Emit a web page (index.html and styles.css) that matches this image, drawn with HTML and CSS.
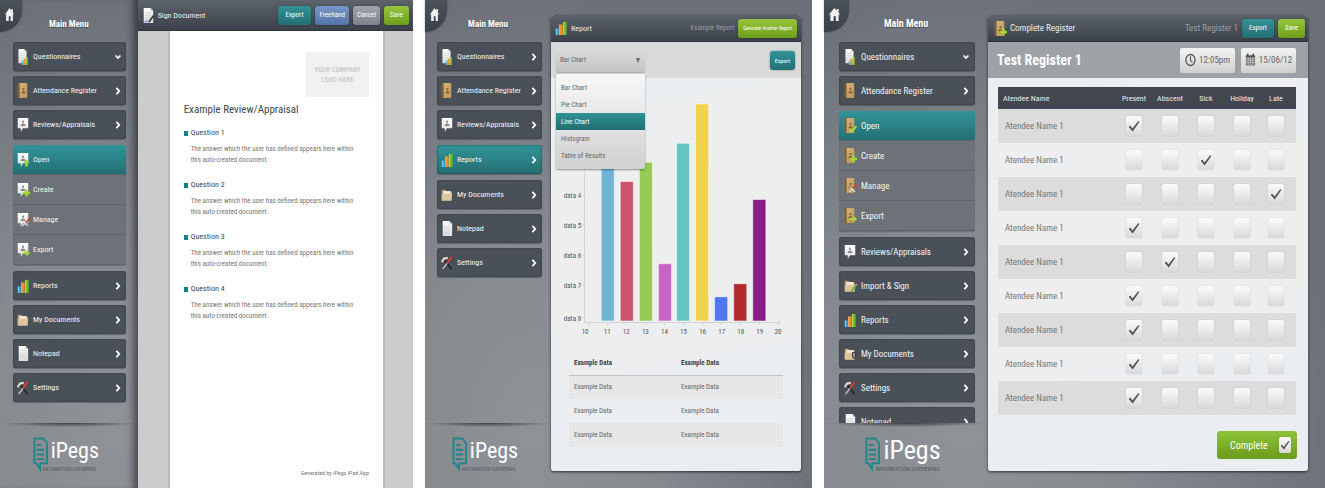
FILE: index.html
```html
<!DOCTYPE html>
<html lang="en">
<head>
<meta charset="utf-8">
<meta name="viewport" content="width=device-width, initial-scale=1">
<title>iPegs</title>
<link rel="stylesheet" href="styles.css">
</head>
<body>
<svg class="defs" aria-hidden="true">
  <defs>
    <linearGradient id="paper" x2="0" y2="1"><stop stop-color="#fff"/><stop offset="1" stop-color="#dcdcdc"/></linearGradient>
    <linearGradient id="tan" x2="1" y2="1"><stop stop-color="#d9b67c"/><stop offset="1" stop-color="#bb9358"/></linearGradient>
    <symbol id="home" viewBox="0 0 12 14" preserveAspectRatio="none"><path fill="#f2f2f2" d="M6 0 0 7h1.500v7H5V9h2.500v5h3V7H12L10.500 5V1H8.500v2z"/></symbol>
    <symbol id="bars" viewBox="0 0 14 16" preserveAspectRatio="none"><path fill="#2fa4dc" d="M1 8.500h3.500V16H1z"/><path fill="#7fd0f4" d="M1 8.500h1.200V16H1z"/><path fill="#ee8a24" d="M5 4h4v12H5z"/><path fill="#f9b566" d="M5 4h1.200v12H5z"/><path fill="#6fbb1e" d="M9.500 1h4v15h-4z"/><path fill="#b5e46a" d="M9.500 1h1.200v15H9.500z"/></symbol>
    <symbol id="page" viewBox="0 0 14 18" preserveAspectRatio="none"><path fill="url(#paper)" d="M2 1h8l3 3v13H2z"/><path fill="#bbb" d="M10 1v3h3z"/><path stroke="#c9c9c9" stroke-width=".7" d="M4 6h7M4 8.500h7M4 11h7M4 13.500h7"/></symbol>
    <symbol id="quest" viewBox="0 0 14 18" preserveAspectRatio="none"><use href="#page" width="12" height="17"/><use href="#bars" x="5" y="9" width="8" height="9"/></symbol>
    <symbol id="book" viewBox="0 0 14 18" preserveAspectRatio="none"><rect x="1" y="1" width="11" height="16" rx="1" fill="url(#tan)"/><path fill="#7b5a30" d="M1 1h2v16H1z"/><circle cx="7.500" cy="7.500" r="1.200" fill="#7c6038"/><path fill="#7c6038" d="M5 12q.5-2.500 2.500-2.500T10 12z"/></symbol>
    <symbol id="speech" viewBox="0 0 16 18" preserveAspectRatio="none"><path fill="url(#paper)" d="M1 2h14v11H8l-3 4v-4H1z"/><circle cx="8" cy="6" r="1.300" fill="#888"/><path fill="#888" d="M4.500 10.500Q5.500 8 8 8t3.500 2.500z"/></symbol>
    <symbol id="folder" viewBox="0 0 16 16" preserveAspectRatio="none"><path fill="#b99d72" d="M1 2h5l1 2h7v10H1z"/><path fill="#f4ead7" d="M3 3.500h10v4H3z"/><path fill="#dcc49b" d="M1 6.500h11l3-1-1 9H1z"/></symbol>
    <symbol id="tools" viewBox="0 0 16 16" preserveAspectRatio="none"><path stroke="#222" stroke-width="1.800" d="M5 5l9 10"/><path stroke="#ddd" stroke-width="2.600" fill="none" d="M1 7l3-4 5-1"/><path stroke="#d6402d" stroke-width="2.400" d="M14 1 8 8.500"/><path stroke="#ccc" stroke-width="1.600" d="M8 8.500 2 15"/></symbol>
    <symbol id="up" viewBox="0 0 8 8"><path fill="#a5d92f" d="M4 0 8 4H5.500v4h-3V4H0z"/></symbol>
    <symbol id="plus" viewBox="0 0 8 8"><path fill="#a5d92f" d="M2.700 0h2.600v2.700H8v2.600H5.300V8H2.700V5.300H0V2.700h2.700z"/></symbol>
    <symbol id="right" viewBox="0 0 8 8"><path fill="#a5d92f" d="M4 0l4 4-4 4V5.500H0v-3h4z"/></symbol>
    <symbol id="tick" viewBox="0 0 8 8"><path fill="none" stroke="#a5d92f" stroke-width="2" d="M.700 4 3 6.500 7.300 1"/></symbol>
    <symbol id="pen" viewBox="0 0 8 8"><path stroke="#d6402d" stroke-width="1.700" d="M7.500.500 3.500 5"/><path stroke="#ddd" stroke-width="1.300" d="M3.500 5 .500 8M1 3l5 5"/></symbol>
    <symbol id="chev" viewBox="0 0 6 10"><path fill="none" stroke="#fff" stroke-width="2.200" d="M1 1l3.500 4L1 9"/></symbol>
    <symbol id="down" viewBox="0 0 8 6"><path fill="none" stroke="#fff" stroke-width="2.200" d="M.800 1 4 4.500 7.200 1"/></symbol>
    <symbol id="signdoc" viewBox="0 0 14 18" preserveAspectRatio="none"><use href="#page" width="14" height="18"/><path stroke="#333" stroke-width="1.800" d="M13.500 9 8 16"/><path stroke="#3f7fd0" d="M3 15.500h4"/></symbol>
    <symbol id="mark" viewBox="0 0 16 36"><path fill="none" stroke="#1f8589" stroke-width="2" d="M1.500 1.500H11l4 5V28H7.500v6L3.500 28h-2z"/><path stroke="#1f8589" stroke-width="2" d="M4 8.500h5M4 13.500h8M4 18.500h8M4 23.500h8"/></symbol>
    <symbol id="clock" viewBox="0 0 12 14"><ellipse cx="6" cy="7" rx="5" ry="6" fill="none" stroke="#555" stroke-width="1.400"/><path fill="none" stroke="#555" stroke-width="1.200" d="M6 3v4.500l2.200 2"/></symbol>
    <symbol id="cal" viewBox="0 0 12 14"><path fill="#777" d="M1 2h10v11H1z"/><path fill="#555" d="M1 2h10v2.500H1z"/><path stroke="#444" stroke-width="1.500" d="M3 0v3M9 0v3"/><path stroke="#ddd" stroke-width=".6" d="M1 4.700h10M1 7.200h10M1 9.700h10M3.500 4.500V13M6 4.500V13M8.500 4.500V13"/></symbol>
  </defs>
</svg>

<main class="screens">
  <section class="screen sign">
    <aside class="side">
      <button class="home" aria-label="Home"><svg><use href="#home"/></svg></button>
      <h2 class="side-title">Main Menu</h2>
      <nav class="menu">
        <button class="item"><svg class="ico"><use href="#quest"/></svg><span>Questionnaires</span><svg class="arrow"><use href="#down"/></svg></button>
        <button class="item"><svg class="ico"><use href="#book"/></svg><span>Attendance Register</span><svg class="arrow"><use href="#chev"/></svg></button>
        <button class="item"><svg class="ico"><use href="#speech"/></svg><span>Reviews/Appraisals</span><svg class="arrow"><use href="#chev"/></svg></button>
        <div class="sub">
          <button class="subitem active"><svg class="ico"><use href="#speech"/><use href="#up" x="6" y="8" width="7" height="8"/></svg><span>Open</span></button>
          <button class="subitem"><svg class="ico"><use href="#speech"/><use href="#plus" x="6" y="8" width="7" height="8"/></svg><span>Create</span></button>
          <button class="subitem"><svg class="ico"><use href="#speech"/><use href="#pen" x="5" y="7" width="8" height="8"/></svg><span>Manage</span></button>
          <button class="subitem"><svg class="ico"><use href="#speech"/><use href="#right" x="6" y="8" width="7" height="8"/></svg><span>Export</span></button>
        </div>
        <button class="item"><svg class="ico short"><use href="#bars"/></svg><span>Reports</span><svg class="arrow"><use href="#chev"/></svg></button>
        <button class="item"><svg class="ico short"><use href="#folder"/></svg><span>My Documents</span><svg class="arrow"><use href="#chev"/></svg></button>
        <button class="item"><svg class="ico"><use href="#page"/></svg><span>Notepad</span><svg class="arrow"><use href="#chev"/></svg></button>
        <button class="item"><svg class="ico short"><use href="#tools"/></svg><span>Settings</span><svg class="arrow"><use href="#chev"/></svg></button>
      </nav>
      <footer class="brand"><svg><use href="#mark"/></svg><div><b>iPegs</b><small>INFORMATION GATHERING</small></div></footer>
    </aside>
    <div class="viewer">
      <header class="bar">
        <svg class="ico"><use href="#signdoc"/></svg><h1>Sign Document</h1>
        <button class="btn teal">Export</button><button class="btn blue">Freehand</button><button class="btn grey">Cancel</button><button class="btn green">Save</button>
      </header>
      <article class="paper">
        <div class="logo-box">YOUR COMPANY<br>LOGO HERE</div>
        <h2>Example Review/Appraisal</h2>
        <section><h3>Question 1</h3><p>The answer which the user has defined appears here within this auto-created document.</p></section>
        <section><h3>Question 2</h3><p>The answer which the user has defined appears here within this auto-created document.</p></section>
        <section><h3>Question 3</h3><p>The answer which the user has defined appears here within this auto-created document.</p></section>
        <section><h3>Question 4</h3><p>The answer which the user has defined appears here within this auto-created document.</p></section>
        <footer>Generated by iPegs iPad App</footer>
      </article>
    </div>
  </section>

  <section class="screen report">
    <aside class="side">
      <button class="home" aria-label="Home"><svg><use href="#home"/></svg></button>
      <h2 class="side-title">Main Menu</h2>
      <nav class="menu">
        <button class="item"><svg class="ico"><use href="#quest"/></svg><span>Questionnaires</span><svg class="arrow"><use href="#chev"/></svg></button>
        <button class="item"><svg class="ico"><use href="#book"/></svg><span>Attendance Register</span><svg class="arrow"><use href="#chev"/></svg></button>
        <button class="item"><svg class="ico"><use href="#speech"/></svg><span>Reviews/Appraisals</span><svg class="arrow"><use href="#chev"/></svg></button>
        <button class="item active"><svg class="ico short"><use href="#bars"/></svg><span>Reports</span><svg class="arrow"><use href="#chev"/></svg></button>
        <button class="item"><svg class="ico short"><use href="#folder"/></svg><span>My Documents</span><svg class="arrow"><use href="#chev"/></svg></button>
        <button class="item"><svg class="ico"><use href="#page"/></svg><span>Notepad</span><svg class="arrow"><use href="#chev"/></svg></button>
        <button class="item"><svg class="ico short"><use href="#tools"/></svg><span>Settings</span><svg class="arrow"><use href="#chev"/></svg></button>
      </nav>
      <footer class="brand"><svg><use href="#mark"/></svg><div><b>iPegs</b><small>INFORMATION GATHERING</small></div></footer>
    </aside>
    <div class="panel">
      <header class="bar">
        <svg class="ico short"><use href="#bars"/></svg><h1>Report</h1><span class="note">Example Report</span><button class="btn green">Generate Another Report</button>
      </header>
      <div class="tools">
        <div class="picker">
          <select aria-label="Chart type"><option>Bar Chart</option><option>Pie Chart</option><option>Line Chart</option><option>Histogram</option><option>Table of Results</option></select>
          <div class="options">
            <button>Bar Chart</button><button>Pie Chart</button><button class="on">Line Chart</button><button>Histogram</button><button>Table of Results</button>
          </div>
        </div>
        <button class="btn teal">Export</button>
      </div>
      <svg class="chart" viewBox="0 0 249 267" role="img" aria-label="Bar chart">
        <path fill="none" stroke="#d2d2d2" d="M33.500 60v183.500H229M31 117.500h3M31 146.500h3M31 176.500h3M31 206.500h3M31 238.500h3M37.500 243v3M56.500 243v3M75.500 243v3M94.500 243v3M113.500 243v3M132.500 243v3M151.500 243v3M169.500 243v3M188.500 243v3M207.500 243v3M226.500 243v3"/>
        <g stroke="#fff" stroke-opacity=".5">
          <path fill="#70b5d6" d="M50 72h13v170H50z"/><path fill="#cb566b" d="M69 103h13v139H69z"/><path fill="#96cb57" d="M88 84h13v158H88z"/><path fill="#c564c7" d="M107 185h13v57h-13z"/><path fill="#67c5c6" d="M125 65h13v177h-13z"/><path fill="#efd24e" d="M144 26h13v216h-13z"/><path fill="#4f78ef" d="M163 218h13v24h-13z"/><path fill="#b02b2d" d="M182 205h13v37h-13z"/><path fill="#891c85" d="M201 121h13v121h-13z"/>
        </g>
        <g class="ylab"><text x="30" y="120">data 4</text><text x="30" y="149">data 5</text><text x="30" y="179">data 6</text><text x="30" y="209">data 7</text><text x="30" y="242">data 8</text></g>
        <g class="xlab"><text x="34" y="255">10</text><text x="56" y="255">11</text><text x="75" y="255">12</text><text x="94" y="255">13</text><text x="113" y="255">14</text><text x="132" y="255">15</text><text x="151" y="255">16</text><text x="170" y="255">17</text><text x="189" y="255">18</text><text x="208" y="255">19</text><text x="226" y="255">20</text></g>
      </svg>
      <table class="data">
        <thead><tr><th>Example Data</th><th>Example Data</th></tr></thead>
        <tbody><tr><td>Example Data</td><td>Example Data</td></tr><tr><td>Example Data</td><td>Example Data</td></tr><tr><td>Example Data</td><td>Example Data</td></tr></tbody>
      </table>
    </div>
  </section>

  <section class="screen register">
    <aside class="side">
      <button class="home" aria-label="Home"><svg><use href="#home"/></svg></button>
      <h2 class="side-title">Main Menu</h2>
      <nav class="menu">
        <button class="item"><svg class="ico"><use href="#quest"/></svg><span>Questionnaires</span><svg class="arrow"><use href="#down"/></svg></button>
        <button class="item"><svg class="ico"><use href="#book"/></svg><span>Attendance Register</span><svg class="arrow"><use href="#chev"/></svg></button>
        <div class="sub">
          <button class="subitem active"><svg class="ico"><use href="#book"/><use href="#tick" x="5" y="8" width="8" height="8"/></svg><span>Open</span></button>
          <button class="subitem"><svg class="ico"><use href="#book"/><use href="#plus" x="6" y="8" width="7" height="8"/></svg><span>Create</span></button>
          <button class="subitem"><svg class="ico"><use href="#book"/><use href="#pen" x="5" y="7" width="8" height="8"/></svg><span>Manage</span></button>
          <button class="subitem"><svg class="ico"><use href="#book"/><use href="#right" x="6" y="8" width="7" height="8"/></svg><span>Export</span></button>
        </div>
        <button class="item"><svg class="ico"><use href="#speech"/></svg><span>Reviews/Appraisals</span><svg class="arrow"><use href="#chev"/></svg></button>
        <button class="item"><svg class="ico short"><use href="#folder"/><path stroke="#5fb83a" stroke-width="2" d="M12 6l-5 7"/><path stroke="#e06a6a" stroke-width="2" d="M13 5l-1 1.500"/></svg><span>Import &amp; Sign</span><svg class="arrow"><use href="#chev"/></svg></button>
        <button class="item"><svg class="ico short"><use href="#bars"/></svg><span>Reports</span><svg class="arrow"><use href="#chev"/></svg></button>
        <button class="item"><svg class="ico short"><use href="#folder"/><path fill="#444" d="M8 5h4v5l-2 2-2-2z"/><path fill="#ddd" d="M9.500 6h1v4h-1z"/></svg><span>My Documents</span><svg class="arrow"><use href="#chev"/></svg></button>
        <button class="item"><svg class="ico short"><use href="#tools"/></svg><span>Settings</span><svg class="arrow"><use href="#chev"/></svg></button>
        <button class="item"><svg class="ico"><use href="#page"/></svg><span>Notepad</span><svg class="arrow"><use href="#chev"/></svg></button>
      </nav>
      <footer class="brand"><svg><use href="#mark"/></svg><div><b>iPegs</b><small>INFORMATION GATHERING</small></div></footer>
    </aside>
    <div class="panel">
      <header class="bar">
        <svg class="ico"><use href="#book"/><use href="#plus" x="6" y="8" width="7" height="8"/></svg><h1>Complete Register</h1><span class="note">Test Register 1</span><button class="btn teal">Export</button><button class="btn green">Save</button>
      </header>
      <div class="title-row">
        <h2>Test Register 1</h2>
        <button class="chip"><svg><use href="#clock"/></svg>12:05pm</button>
        <button class="chip"><svg><use href="#cal"/></svg>15/06/12</button>
      </div>
      <table class="roll">
        <thead><tr><th class="name">Atendee Name</th><th>Present</th><th>Abscent</th><th>Sick</th><th>Holiday</th><th>Late</th></tr></thead>
        <tbody id="roll"></tbody>
      </table>
      <label class="complete">Complete<input type="checkbox" checked></label>
    </div>
  </section>
</main>
<script src="register.js"></script>
</body>
</html>
```
FILE: styles.css
```css
* { box-sizing: border-box; }
body {
  margin: 0;
  background: #fff;
  font-family: "Roboto Condensed", Roboto, Lato, sans-serif;
  font-size: 8px;
}
h1, h2, h3, p { margin: 0; font-weight: 400; }
button, select, input { font: inherit; margin: 0; border: 0; padding: 0; }
.defs { position: absolute; width: 0; height: 0; }

.screens {
  display: grid;
  grid-template-columns: 413fr 387fr 501fr;
  gap: 12px;
  min-height: 100vh;
  padding-bottom: 2px;
}
.screen {
  display: grid;
  background: radial-gradient(ellipse 75% 90% at 28% 88%, #8f9397 0%, #868a8f 45%, #6c7179 100%);
}
.sign { grid-template-columns: 1fr 2fr; }
.report { grid-template-columns: 126fr 261fr; }
.register { grid-template-columns: 164fr 337fr; font-size: 9px; }

/* sidebar */
.side { position: relative; display: flex; flex-direction: column; min-width: 0; }
.sign .side { box-shadow: inset -10px 0 8px -6px #0008; }
.home {
  position: absolute; left: 0; top: 0;
  width: 22px; height: 32px;
  padding: 0 4px 4px 0;
  border-radius: 0 0 22px 0;
  background: linear-gradient(#4b5159, #3a4047);
  box-shadow: 0 0 2px #0006;
}
.home svg { display: block; width: 9px; height: 13px; margin: 0 auto; }
.register .home { width: 25px; }
.register .home svg { width: 11px; }
.side-title {
  padding: 17px 0 0;
  height: 42px;
  line-height: 14px;
  color: #fff;
  font-size: 9px;
  font-weight: 700;
  text-align: center;
  text-shadow: 0 1px 1px #0005;
}
.register .side-title { font-size: 10px; }
.menu {
  flex: 1 1 0;
  min-height: 0;
  display: flex; flex-direction: column; gap: 5px;
  padding: 0 12px 0 13px;
  overflow: hidden;
}
.report .menu { padding: 0 9px 0 12px; }
.register .menu { padding: 0 13px 0 15px; }
.item, .subitem {
  flex: none;
  display: flex; align-items: center; gap: 4px;
  height: 29px;
  padding: 0 5px 0 4px;
  color: #f4f5f6;
  text-align: left;
  white-space: nowrap;
}
.item { border-radius: 3px; background: #4a5058; box-shadow: inset 0 0 2px #2d3238, 0 1px 1px #0004; }
.item span, .subitem span { flex: 1; min-width: 0; }
.ico { flex: none; width: 12px; height: 17px; overflow: visible; }
.short { height: 14px; }
.arrow { flex: none; width: 6px; height: 8px; }
.register .item, .register .subitem { padding: 0 6px 0 5px; gap: 5px; }
.item.active { margin: 1px 0; }
.item.active, .subitem.active { background: linear-gradient(#319498, #236f73); }
.sub { flex: none; margin: 1px 0; border-radius: 2px; background: #6d7278; box-shadow: 0 1px 1px #0003; }
.subitem { width: 100%; height: 30px; background: none; border-bottom: 1px solid #5f646b; }
.brand {
  flex: none;
  display: flex; justify-content: center; align-items: flex-start; gap: 3px;
  height: 65px;
  padding: 13px 6px 0 0;
  background: radial-gradient(ellipse 50% 4px at 50% 0, #26282bcc, #0000);
}
.brand svg { width: 15px; height: 36px; }
.brand b { display: block; font-size: 22px; line-height: 29px; font-weight: 400; color: #fff; }
.brand small { display: block; margin-left: -8px; font-size: 5px; line-height: 8px; color: #55595e; white-space: nowrap; }
.register .brand b { font-size: 26px; }
.register .brand small { font-size: 6px; }

/* shared bars and buttons */
.bar {
  display: flex; align-items: center; gap: 4px;
  height: 27px;
  padding: 0 4px;
  background: linear-gradient(#5c636b, #3b4149);
  border-bottom: 1px solid #2e3339;
  color: #eceded;
}
.bar h1 { flex: 1; font-size: inherit; white-space: nowrap; }
.note { color: #9a9ea3; white-space: nowrap; }
.btn {
  height: 19px;
  padding: 0 7px;
  border-radius: 3px;
  color: #fff;
  font-size: 7px;
  white-space: nowrap;
  box-shadow: 0 0 2px #0006;
}
.teal { background: linear-gradient(#319297, #246f73); }
.green { background: linear-gradient(#97c53e, #6c9f1b); }
.blue { background: linear-gradient(#7695c8, #5474a8); }
.grey { background: linear-gradient(#a0a4ac, #7e828a); }

/* document */
.viewer { display: flex; flex-direction: column; background: #ccc; }
.sign .bar { height: 31px; }
.sign .btn { padding: 0 4px; }
.sign .bar .teal { padding: 0 8px; }
.sign .bar .green { padding: 0 6px; }
.paper {
  flex: 1;
  display: flex; flex-direction: column;
  margin: 0 28px 0 30px;
  padding: 21px 14px 8px 14px;
  border: solid #b9b9b9; border-width: 0 2px;
  background: #fff;
}
.logo-box {
  align-self: flex-end;
  display: grid; align-content: center;
  width: 63px; height: 45px;
  background: #f1f1f1;
  color: #bcbcbc;
  font-size: 7px; line-height: 10px;
  text-align: center;
}
.paper h2 { margin: 6px 0 9px; font-size: 11px; line-height: 14px; color: #41474e; }
.paper section { height: 52px; }
.paper h3 { display: flex; align-items: center; gap: 3px; font-size: 8px; line-height: 14px; color: #41474e; }
.paper h3::before { content: ""; width: 4px; height: 5px; background: #1a8085; }
.paper p { padding: 4px 12px 0 7px; font-size: 7px; line-height: 11px; color: #777; }
.paper footer { margin-top: auto; text-align: right; font-size: 6px; line-height: 14px; color: #777; }

/* panels */
.panel {
  display: flex; flex-direction: column;
  margin: 15px 11px 17px 0;
  border-radius: 3px;
  overflow: hidden;
  background: linear-gradient(170deg, #eaeff3, #eee 40%, #eee 60%, #eaeef2 85%);
  box-shadow: 0 1px 3px #000a;
}
.register .panel { margin-right: 17px; }
.tools {
  display: flex; justify-content: space-between; align-items: center;
  height: 36px;
  padding: 0 6px 0 5px;
  background: #d7d9da;
}
.report .note { font-size: 7px; }
.report .btn { padding: 0 5px; font-size: 5px; }
.report .tools .btn { font-size: 6px; }
.picker { position: relative; width: 89px; font-size: 7px; }
.picker select {
  display: block;
  appearance: none;
  width: 100%; height: 24px;
  padding: 0 4px;
  border-radius: 2px;
  background: linear-gradient(#dcdcdc, #c4c4c4);
  box-shadow: 0 1px 1px #0003;
  color: #666;
}
.picker::after {
  content: "";
  position: absolute; right: 5px; top: 10px;
  border: solid transparent; border-width: 5px 2px 0; border-top-color: #666;
}
.options {
  position: absolute; left: 0; top: 26px; z-index: 1;
  width: 100%;
  padding: 5px 0;
  border-radius: 2px;
  background: linear-gradient(#f8f8f8, #d0d0d0);
  box-shadow: 0 1px 2px #0006;
}
.options button { display: block; width: 100%; height: 17px; padding: 0 5px; background: none; color: #666; text-align: left; }
.options .on { background: linear-gradient(#2f9296, #246d71); color: #fff; }
.chart { display: block; width: 100%; }
.chart text { font-size: 7px; fill: #555; }
.ylab { text-anchor: end; }
.xlab { text-anchor: middle; }
.data { margin: 5px 18px 0; border-collapse: collapse; table-layout: fixed; font-size: 7px; color: #666; }
.data th, .data td { height: 24px; padding: 0 5px; text-align: left; }
.data th { border-bottom: 1px solid #c4c4c4; color: #444; }
.data tbody tr:nth-child(odd) { background: #e7e7e7; }

/* register */
.title-row {
  display: flex; align-items: center; gap: 6px;
  height: 36px;
  padding: 0 12px 0 9px;
  background: #9da2a6;
}
.title-row h2 { flex: 1; font-size: 14px; font-weight: 700; color: #fff; white-space: nowrap; }
.chip {
  display: flex; align-items: center; justify-content: center; gap: 3px;
  width: 55px; height: 25px;
  border-radius: 2px;
  background: linear-gradient(#f3f3f3, #d0d0d0);
  color: #666;
  font-size: 9px;
}
.chip svg { flex: none; width: 11px; height: 14px; }
.register .bar { padding: 0 3px 0 6px; }
.roll { margin: 9px 12px 0 10px; border-collapse: collapse; table-layout: fixed; color: #777; }
.roll th { width: 36px; height: 22px; padding: 0; background: #41464f; color: #eee; font-size: 8px; font-weight: 400; }
.roll th.name { width: auto; padding-left: 5px; text-align: left; }
.roll td { height: 34px; padding: 0; text-align: center; }
.roll td:first-child { padding-left: 7px; text-align: left; }
.roll td:last-child, .roll th:last-child { padding-right: 4px; }
.roll tbody tr:nth-child(odd) { background: #dcdcdc; }
input[type="checkbox"] {
  appearance: none;
  flex: none;
  display: inline-grid; place-items: center;
  width: 16px; height: 20px;
  border-radius: 2px;
  background: linear-gradient(#fbfbfb, #d8d8d8);
  box-shadow: 0 0 1px #0005;
  vertical-align: middle;
}
input[type="checkbox"]:checked::after {
  content: "";
  width: 11px; height: 11px;
  background: #505050;
  clip-path: polygon(0 55%, 16% 48%, 36% 72%, 88% 6%, 100% 12%, 38% 100%);
}
.complete {
  align-self: flex-end;
  display: flex; align-items: center; justify-content: space-between;
  width: 80px; height: 28px;
  margin: 16px 11px 0;
  padding: 0 6px 0 13px;
  border-radius: 3px;
  background: linear-gradient(#8fc23a, #6a9b1b);
  color: #fff;
  font-size: 10px;
}
.complete input[type="checkbox"] { width: 12px; height: 16px; }
.complete input[type="checkbox"]:checked::after { width: 9px; height: 9px; }
```
FILE: register.js
```js
const columns = ["Present", "Abscent", "Sick", "Holiday", "Late"];
const marks = [0, 2, 4, 0, 1, 0, 0, 0, 0];

document.getElementById("roll").innerHTML = marks.map(mark =>
  "<tr><td>Atendee Name 1</td>" + columns.map((name, i) =>
    `<td><input type="checkbox" aria-label="${name}"${i === mark ? " checked" : ""}></td>`
  ).join("") + "</tr>"
).join("");
```
